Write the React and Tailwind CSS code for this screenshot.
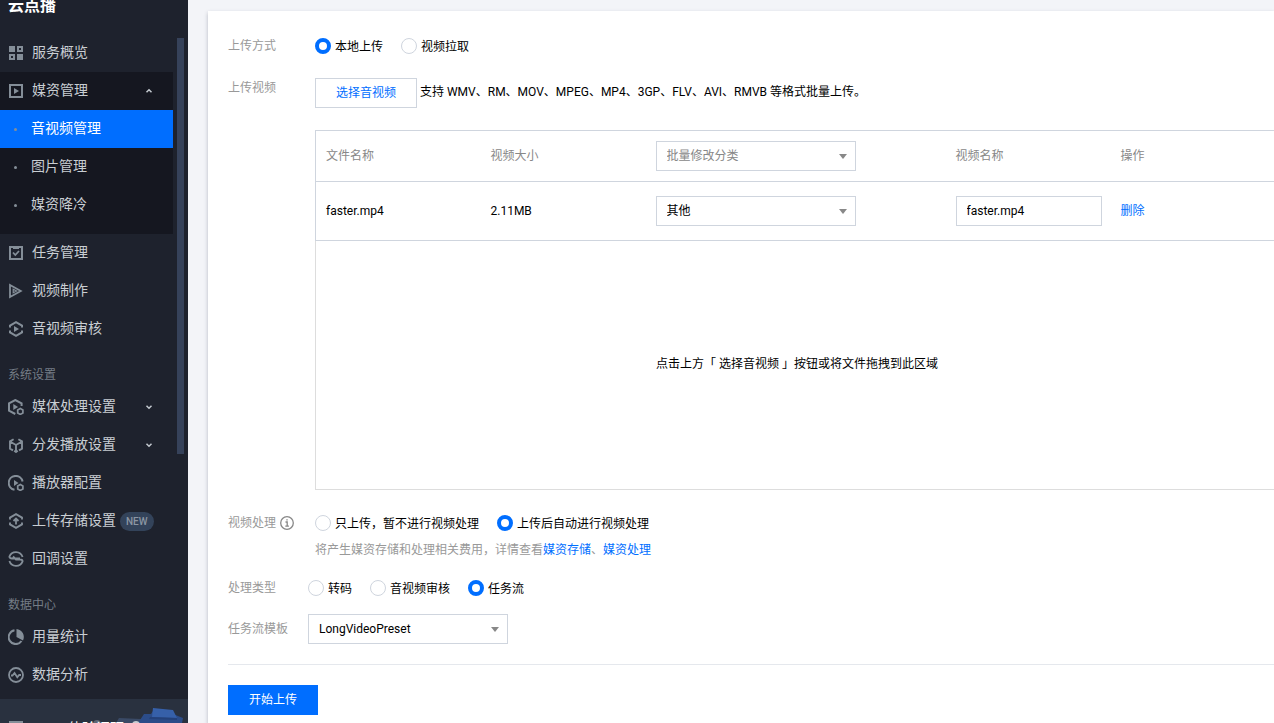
import React from "react";

const iconProps = { width: 16, height: 16, viewBox: "0 0 16 16", fill: "none", stroke: "currentColor", strokeWidth: 2, className: "shrink-0 text-[#848e98]", "aria-hidden": true };

const Gear = () => <path d="M12.3 9.4 14.900 10.900v3l-2.600 1.500-2.600-1.500v-3z" strokeWidth="1.700" />;

const icons = {
  overview: (
    <svg {...iconProps}>
      <path d="M1 1h6v6H1zM9 9h6v6H9z" fill="currentColor" stroke="none" />
      <path d="M10 2h4v4h-4zM2 10h4v4H2z" />
    </svg>
  ),
  media: (
    <svg {...iconProps}>
      <path d="M2 2h12v12H2z" />
      <path d="M6 5l5 3-5 3z" fill="currentColor" stroke="none" />
    </svg>
  ),
  task: (
    <svg {...iconProps}>
      <path d="M2 2h12v12H2z" />
      <path d="M5 3h6" />
      <path d="M5 7.5 7.3 10 11 6" strokeWidth="1.8" />
    </svg>
  ),
  make: (
    <svg {...iconProps}>
      <path d="M2 2v12L12.800 8z" strokeWidth="1.8" />
      <path d="M5.2 6.2v3.6L8.6 8z" strokeWidth="1.2" />
    </svg>
  ),
  audit: (
    <svg {...iconProps}>
      <path d="M2 6.5V4.6L8 1.2l6 3.4v1.9M14 9.5v1.9l-6 3.4-6-3.4V9.5" strokeWidth="2" />
      <path d="M6 5l5 3-5 3z" fill="currentColor" stroke="none" />
    </svg>
  ),
  process: (
    <svg {...iconProps}>
      <path d="M13.6 7V4.4L7.3 1 1 4.4v7.2L7.3 15" strokeWidth="2" />
      <path d="M5.3 5l4.8 3-4.8 3z" fill="currentColor" stroke="none" />
      <Gear />
    </svg>
  ),
  deliver: (
    <svg {...iconProps}>
      <path d="M5.6 2.2 2 4.4v7.2l3 1.8M10.4 2.2 14 4.4v7.2l-3 1.8M2.4 4.8 8 8l5.600-3.200M8 8v7.500M6.200 13.800 8 15l1.800-1.200" strokeWidth="1.900" />
    </svg>
  ),
  player: (
    <svg {...iconProps}>
      <path d="M14.600 6.500A7 7 0 1 0 6.500 14.800" strokeWidth="2" />
      <path d="M6 5l4.500 3L6 11z" fill="currentColor" stroke="none" />
      <Gear />
    </svg>
  ),
  storage: (
    <svg {...iconProps}>
      <path d="M2 6.500V4.600L8 1.200l6 3.400v1.900M14 9.500v1.900l-6 3.400-6-3.400V9.500" strokeWidth="1.900" />
      <path d="M8 11.500V6M5.500 8 8 5.500 10.500 8" strokeWidth="1.800" />
    </svg>
  ),
  callback: (
    <svg {...iconProps}>
      <path d="M14.600 6A7 7 0 0 0 1.400 5.600c0 1.400 1 1.900 2.600 1.900h8M1.400 10a7 7 0 0 0 13.200.4c0-1.400-1-1.900-2.600-1.900H8L5 5.500" strokeWidth="1.800" />
    </svg>
  ),
  usage: (
    <svg {...iconProps}>
      <path d="M6.500 1.200a7 7 0 1 0 7 10.800" strokeWidth="2" />
      <path d="M8.500 0A8 8 0 0 1 15 11.500L8.500 8z" fill="currentColor" stroke="none" />
    </svg>
  ),
  analysis: (
    <svg {...iconProps}>
      <circle cx="8" cy="8" r="7" strokeWidth="1.800" />
      <path d="M3 8.500h1.500l2-2.500 2.800 4.300L11.200 8H13" strokeWidth="1.800" />
    </svg>
  ),
};

const Chevron = ({ up }) => (
  <svg className="ml-auto text-[#c4cad0]" width="8" height="8" viewBox="0 0 8 8" fill="none" stroke="currentColor" strokeWidth="1.5" aria-hidden="true">
    <path d={up ? "M1.500 5.200 4 2.800l2.500 2.400" : "M1.500 2.800 4 5.200l2.500-2.400"} />
  </svg>
);

function NavItem({ icon, label, badge, chevron }) {
  return (
    <a href="#" className="flex h-[38px] items-center gap-2 pl-2 pr-5 text-sm whitespace-nowrap text-[#c9ced3]">
      {icons[icon]}
      <span className="pb-0.5">{label}</span>
      {badge && <span className="-ml-1 rounded-full bg-[#33435a] px-1.5 text-[10px] leading-[19px] font-medium text-[#8b96a3]">{badge}</span>}
      {chevron && <Chevron up={chevron === "up"} />}
    </a>
  );
}

function SubItem({ label, active }) {
  return (
    <a
      href="#"
      aria-current={active ? "page" : undefined}
      className={`flex h-[38px] items-center gap-3.5 pl-3.5 text-sm ${active ? "bg-[#006eff] text-white" : "text-[#c9ced3]"}`}
    >
      <span className="size-[3px] rounded-full bg-[#848e98]" />
      <span className="pb-0.5">{label}</span>
    </a>
  );
}

const NavHeading = ({ children }) => <h2 className="h-10 pt-[13px] pl-2 text-xs leading-7 text-[#757d86]">{children}</h2>;

function Sidebar() {
  return (
    <aside className="flex h-screen w-[188px] shrink-0 flex-col overflow-hidden bg-[#1e222d]">
      <h1 className="h-[34px] shrink-0 pl-2 text-base leading-3 font-bold text-white">云点播</h1>
      <div className="flex min-h-0 flex-1 gap-1 overflow-hidden">
        <nav className="w-[173px]">
          <NavItem icon="overview" label="服务概览" />
          <div className="bg-[#151720] pb-2.5">
            <NavItem icon="media" label="媒资管理" chevron="up" />
            <SubItem label="音视频管理" active />
            <SubItem label="图片管理" />
            <SubItem label="媒资降冷" />
          </div>
          <NavItem icon="task" label="任务管理" />
          <NavItem icon="make" label="视频制作" />
          <NavItem icon="audit" label="音视频审核" />
          <NavHeading>系统设置</NavHeading>
          <NavItem icon="process" label="媒体处理设置" chevron="down" />
          <NavItem icon="deliver" label="分发播放设置" chevron="down" />
          <NavItem icon="player" label="播放器配置" />
          <NavItem icon="storage" label="上传存储设置" badge="NEW" />
          <NavItem icon="callback" label="回调设置" />
          <NavHeading>数据中心</NavHeading>
          <NavItem icon="usage" label="用量统计" />
          <NavItem icon="analysis" label="数据分析" />
        </nav>
        <div className="mt-1 h-[416px] w-[7px] bg-[#36425a]" />
      </div>
      <div className="relative flex h-6 shrink-0 items-start overflow-hidden bg-[#29313f] pl-2">
        <svg className="absolute top-0 right-0" width="96" height="24" viewBox="0 0 96 24" aria-hidden="true">
          <circle cx="5" cy="25" r="4" fill="#5d6673" />
          <path d="M24 24l3-5 22 1 6 4z" fill="#3a4a66" />
          <path d="M46 24l6-9 7 0 2-3 20 3 10 4-1 5z" fill="#2b4c89" />
          <path d="M61 9l20 2 4 8-25-1z" fill="#3660a9" />
          <path d="M58 18l27 1v2l-28-1z" fill="#24417a" />
          <circle cx="44" cy="26" r="4" fill="#c9ced3" />
        </svg>
        <svg className="mt-[22px] shrink-0" width="16" height="16" viewBox="0 0 16 16" fill="#848e98" aria-hidden="true">
          <path d="M1 0h14v14H1z" />
        </svg>
        <a href="#" className="relative mt-[19px] ml-11 shrink-0 text-sm leading-5 text-white">体验调研</a>
      </div>
    </aside>
  );
}

function Radio({ name, label, defaultChecked }) {
  return (
    <label className="flex items-center gap-1">
      <input
        type="radio"
        name={name}
        defaultChecked={defaultChecked}
        className="size-4 appearance-none rounded-full border border-[#cfd5de] bg-white checked:border-4 checked:border-[#006eff]"
      />
      <span className="pt-0.5 leading-4">{label}</span>
    </label>
  );
}

function Select({ label, id, options, muted }) {
  return (
    <div className="grid w-[200px] items-center">
      <select
        id={id}
        aria-label={label}
        className={`col-start-1 row-start-1 h-[30px] w-full appearance-none border border-[#cfd5de] bg-white px-2.5 ${muted ? "text-[#888]" : "text-black"}`}
      >
        {options.map((o) => (
          <option key={o}>{o}</option>
        ))}
      </select>
      <svg className="pointer-events-none col-start-1 row-start-1 mr-[9px] justify-self-end" width="8" height="5" viewBox="0 0 8 5" fill="#888" aria-hidden="true">
        <path d="M0 0h8L4 5z" />
      </svg>
    </div>
  );
}

function FileTable() {
  return (
    <table className="w-full table-fixed border-t border-l border-[#cfd5de]">
      <colgroup>
        <col className="w-[165px]" />
        <col className="w-[165px]" />
        <col className="w-[300px]" />
        <col className="w-[165px]" />
        <col />
      </colgroup>
      <thead>
        <tr className="h-[51px] border-b border-[#cfd5de] text-left text-[#888] *:pl-2.5 *:font-normal">
          <th>文件名称</th>
          <th>视频大小</th>
          <th>
            <Select label="批量修改分类" options={["批量修改分类"]} muted />
          </th>
          <th>视频名称</th>
          <th>操作</th>
        </tr>
      </thead>
      <tbody>
        <tr className="h-[59px] border-b border-[#cfd5de] *:pl-2.5">
          <td>faster.mp4</td>
          <td>2.11MB</td>
          <td>
            <Select label="分类" options={["其他"]} />
          </td>
          <td>
            <input aria-label="视频名称" defaultValue="faster.mp4" className="block h-[30px] w-[146px] border border-[#cfd5de] px-2.5" />
          </td>
          <td>
            <button type="button" className="text-[#006eff]">删除</button>
          </td>
        </tr>
      </tbody>
    </table>
  );
}

const Label = ({ children }) => <div className="flex w-20 shrink-0 items-center gap-1 text-[#999]">{children}</div>;

export default function App() {
  return (
    <div className="flex h-screen overflow-hidden bg-[#f3f4f8] font-[Roboto,'Noto_Sans_CJK_SC',sans-serif]">
      <Sidebar />
      <main className="min-w-0 flex-1 pt-[11px] pl-5">
        <form className="h-full bg-white pt-[25px] pl-5 text-xs leading-5 text-black shadow-[0_2px_4px_rgba(54,58,80,0.32)]">
          <div className="flex gap-[7px]">
            <Label>上传方式</Label>
            <div className="flex gap-[18px]">
              <Radio name="source" label="本地上传" defaultChecked />
              <Radio name="source" label="视频拉取" />
            </div>
          </div>

          <div className="mt-[22px] flex items-start gap-[7px]">
            <Label>上传视频</Label>
            <div className="min-w-0 flex-1">
              <div className="flex items-center gap-[3px]">
                <button type="button" className="h-[30px] w-[102px] border border-[#cfd5de] text-[#006eff]">选择音视频</button>
                <span className="pb-0.5">支持 WMV、RM、MOV、MPEG、MP4、3GP、FLV、AVI、RMVB 等格式批量上传。</span>
              </div>
              <div className="mt-[22px]">
                <FileTable />
                <div className="flex h-[249px] items-center justify-center border-b border-l border-[#ddd] pb-0.5 pl-1">
                  点击上方「 选择音视频 」按钮或将文件拖拽到此区域
                </div>
              </div>
            </div>
          </div>

          <div className="mt-[23px] flex items-start gap-[7px]">
            <Label>
              视频处理
              <svg width="14" height="14" viewBox="0 0 14 14" fill="none" stroke="#888" strokeWidth="1.300" aria-hidden="true">
                <circle cx="7" cy="7" r="6.300" />
                <path d="M5.500 6h1.700v4M5.300 10.200h3.600" />
                <path d="M6.300 3.200h1.400v1.400H6.300z" fill="#888" stroke="none" />
              </svg>
            </Label>
            <div>
              <div className="flex h-5 gap-[18px]">
                <Radio name="process" label="只上传，暂不进行视频处理" />
                <Radio name="process" label="上传后自动进行视频处理" defaultChecked />
              </div>
              <p className="mt-[7px] text-[#999]">
                将产生媒资存储和处理相关费用，详情查看<a href="#" className="text-[#006eff]">媒资存储</a>、<a href="#" className="text-[#006eff]">媒资处理</a>
              </p>
            </div>
          </div>

          <div className="mt-[18px] flex">
            <Label>处理类型</Label>
            <div className="flex gap-[18px]">
              <Radio name="type" label="转码" />
              <Radio name="type" label="音视频审核" />
              <Radio name="type" label="任务流" defaultChecked />
            </div>
          </div>

          <div className="mt-4 flex items-center">
            <label htmlFor="template" className="w-20 shrink-0 text-[#999]">任务流模板</label>
            <Select id="template" options={["LongVideoPreset"]} />
          </div>

          <div className="mt-5 border-t border-[#e5e8ed] pt-5">
            <button type="submit" className="h-[30px] w-[90px] bg-[#006eff] text-white">开始上传</button>
          </div>
        </form>
      </main>
    </div>
  );
}
